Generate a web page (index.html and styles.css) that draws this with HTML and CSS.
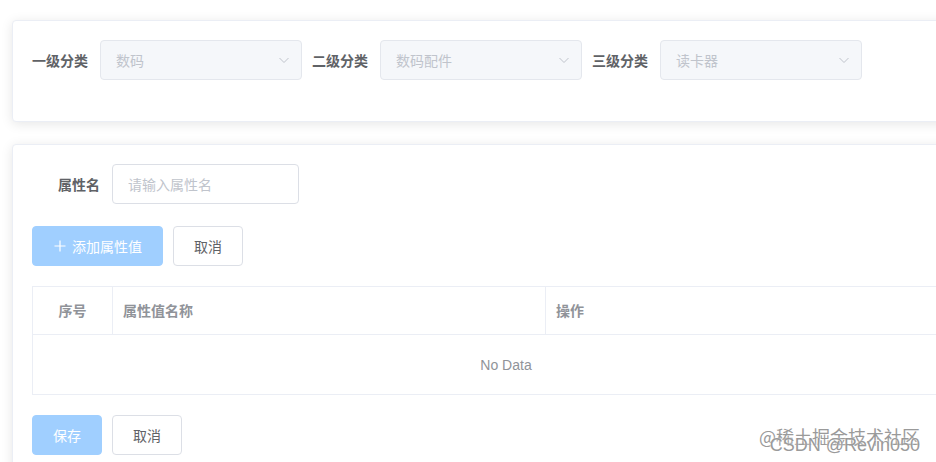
FILE: index.html
```html
<!DOCTYPE html>
<html lang="zh-CN">
<head>
  <meta charset="UTF-8" />
  <meta name="viewport" content="width=device-width, initial-scale=1.0"/>
  <title>属性管理</title>
  <link rel="stylesheet" href="styles.css">
</head>
<body>
  <div class="page">
    <!-- 三级分类选择 -->
    <div class="card">
      <div class="form-row">
        <label class="form-label">一级分类</label>
        <div class="select is-disabled">
          <span class="select-text">数码</span>
          <svg class="arrow" viewBox="0 0 12 12" width="12" height="12"><path d="M1.5 4 L6 8.5 L10.5 4" fill="none" stroke="#c0c4cc" stroke-width="1"/></svg>
        </div>
        <label class="form-label">二级分类</label>
        <div class="select is-disabled">
          <span class="select-text">数码配件</span>
          <svg class="arrow" viewBox="0 0 12 12" width="12" height="12"><path d="M1.5 4 L6 8.5 L10.5 4" fill="none" stroke="#c0c4cc" stroke-width="1"/></svg>
        </div>
        <label class="form-label">三级分类</label>
        <div class="select is-disabled">
          <span class="select-text">读卡器</span>
          <svg class="arrow" viewBox="0 0 12 12" width="12" height="12"><path d="M1.5 4 L6 8.5 L10.5 4" fill="none" stroke="#c0c4cc" stroke-width="1"/></svg>
        </div>
      </div>
    </div>

    <!-- 属性编辑 -->
    <div class="card card-attr">
      <div class="form-row">
        <label class="form-label label-wide">属性名</label>
        <input class="input" type="text" placeholder="请输入属性名">
      </div>

      <div class="btn-row">
        <button class="btn btn-primary" disabled>
          <svg class="plus" viewBox="0 0 12 12" width="12" height="12"><path d="M6 0.5 V11.5 M0.5 6 H11.5" stroke="#fff" stroke-width="1.2"/></svg>
          添加属性值
        </button>
        <button class="btn">取消</button>
      </div>

      <div class="table">
        <div class="table-head">
          <div class="th th-index">序号</div>
          <div class="th">属性值名称</div>
          <div class="th th-last">操作</div>
        </div>
        <div class="table-empty">No Data</div>
      </div>

      <div class="btn-row btn-row-last">
        <button class="btn btn-primary" disabled>保存</button>
        <button class="btn">取消</button>
      </div>
    </div>
  </div>

  <div class="watermark">
    <span class="wm-juejin">@稀土掘金技术社区</span>
    <span class="wm-csdn">CSDN @Revin050</span>
  </div>
</body>
</html>
```

FILE: styles.css
```css
* {
  margin: 0;
  padding: 0;
  box-sizing: border-box;
  font-family: "Noto Sans CJK SC", sans-serif;
}

html, body {
  width: 936px;
  height: 462px;
  overflow: hidden;
  background: #fff;
}

.page {
  width: 1000px;
  padding: 20px 0 0 12px;
}

.card {
  width: 988px;
  background: #fff;
  border: 1px solid #ebeef5;
  border-radius: 4px;
  box-shadow: 0 2px 12px 0 rgba(0, 0, 0, 0.1);
  padding: 19px;
}

.card-attr {
  margin-top: 22px;
}

.form-row {
  display: flex;
  align-items: center;
  height: 40px;
  margin-bottom: 22px;
}

.form-label {
  width: 68px;
  padding-right: 12px;
  font-size: 14px;
  font-weight: bold;
  color: #606266;
  text-align: right;
  flex-shrink: 0;
}

.label-wide {
  width: 80px;
}

.select {
  width: 202px;
  height: 40px;
  margin-right: 10px;
  border: 1px solid #e4e7ed;
  border-radius: 4px;
  background: #f5f7fa;
  display: flex;
  align-items: center;
  justify-content: space-between;
  padding: 0 10px 0 15px;
}

.select-text {
  font-size: 14px;
  color: #c0c4cc;
}

.arrow {
  margin-right: 1px;
}

.input {
  width: 187px;
  height: 40px;
  border: 1px solid #dcdfe6;
  border-radius: 4px;
  padding: 0 15px;
  font-size: 14px;
  color: #606266;
  outline: none;
}

.input::placeholder {
  color: #c0c4cc;
}

.btn-row {
  display: flex;
  gap: 10px;
  margin-bottom: 20px;
}

.btn-row-last {
  margin-top: 20px;
  margin-bottom: 0;
}

.btn {
  height: 40px;
  padding: 0 20px;
  border: 1px solid #dcdfe6;
  border-radius: 4px;
  background: #fff;
  color: #606266;
  font-size: 14px;
  display: flex;
  align-items: center;
  cursor: pointer;
}

.btn-primary {
  background: #a0cfff;
  border-color: #a0cfff;
  color: #fff;
  cursor: not-allowed;
}

.btn-primary .plus {
  margin-right: 6px;
  margin-left: 1px;
}

/* 表格 */
.table {
  width: 948px;
  border: 1px solid #ebeef5;
}

.table-head {
  display: grid;
  grid-template-columns: 80px 1fr 1fr;
  border-bottom: 1px solid #ebeef5;
}

.th {
  height: 47px;
  line-height: 47px;
  padding-left: 10px;
  font-size: 14px;
  font-weight: bold;
  color: #909399;
  border-right: 1px solid #ebeef5;
}

.th-index {
  padding-left: 0;
  text-align: center;
}

.th-last {
  border-right: none;
}

.table-empty {
  height: 59px;
  line-height: 61px;
  text-align: center;
  font-family: "Liberation Sans", Arial, sans-serif;
  font-size: 14px;
  color: #909399;
}

/* 水印 */
.watermark {
  position: absolute;
  right: 16px;
  bottom: 6px;
  width: 162px;
  height: 30px;
  pointer-events: none;
}

.watermark span {
  position: absolute;
  right: 0;
  white-space: nowrap;
  font-size: 18px;
  line-height: 20px;
  color: #9a9a9a;
  text-shadow: 0 0 2px #fff;
}

.wm-juejin {
  top: 0;
}

.wm-csdn {
  top: 9px;
  font-family: "Liberation Sans", Arial, sans-serif;
}
```
